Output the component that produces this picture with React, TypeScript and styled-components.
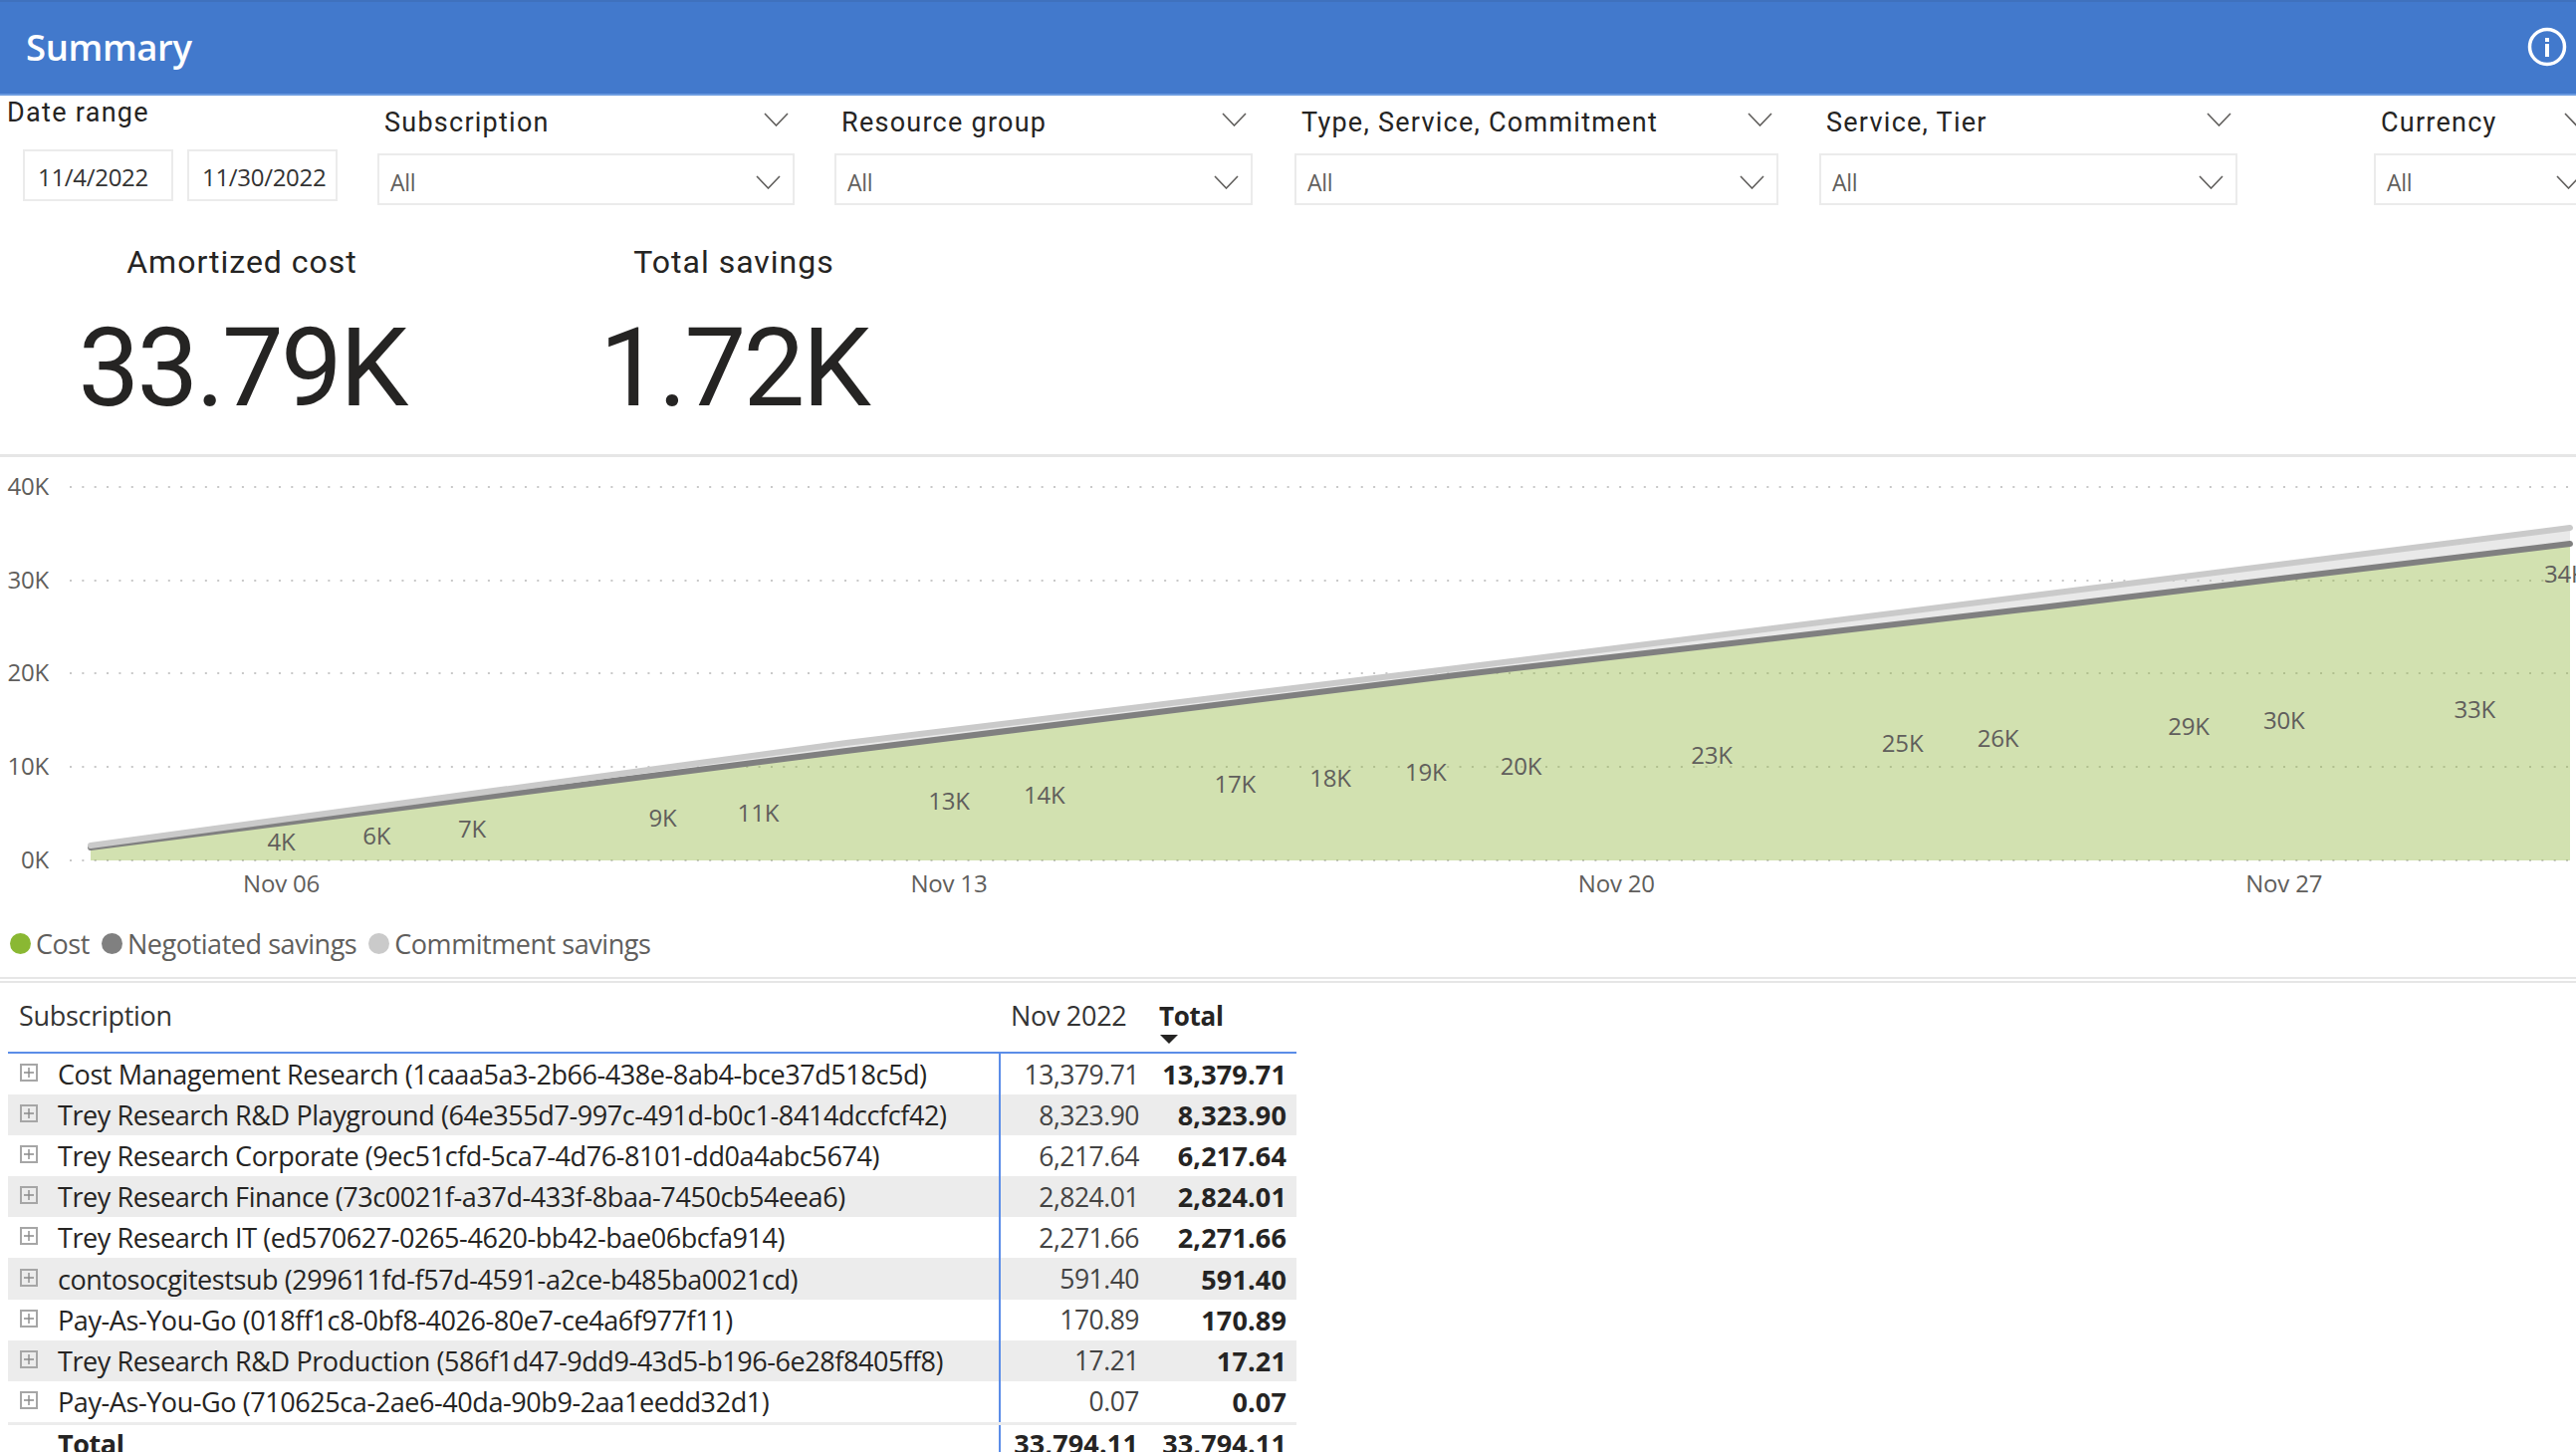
import { createGlobalStyle } from "styled-components";
import styled from "styled-components";

const GlobalStyle = createGlobalStyle`
  html, body {
    margin: 0;
    padding: 0;
    background: #fff;
    font-family: "Open Sans", "Noto Sans", sans-serif;
  }
  * { box-sizing: border-box; }
`;

const Page = styled.div`
  width: 2587px;
  height: 1458px;
  overflow: hidden;
  background: #fff;
`;
const Header = styled.header`
  height: 96px;
  background: #4279cc;
  border-top: 2px solid #3f71bd;
  border-bottom: 2px solid #6c9be0;
  display: flex;
  align-items: center;
  justify-content: space-between;
  padding: 0 9px 2px 26px;
`;
const Title = styled.h1`
  margin: 0;
  color: #fff;
  font-size: 36.5px;
  font-weight: 600;
  letter-spacing: -0.4px;
`;
const FilterRow = styled.div`
  display: flex;
  height: 110px;
`;
const DateGroup = styled.div`
  width: 379px;
  flex: none;
`;
const DateLabel = styled.div`
  height: 34px;
  line-height: 34px;
  padding-left: 7px;
  font-family: "Roboto", sans-serif;
  font-size: 27px;
  letter-spacing: 1.3px;
  color: #252423;
  margin-bottom: 20px;
`;
const DateInputs = styled.div`
  display: flex;
  gap: 14px;
  padding-left: 23px;
`;
const DateBox = styled.div`
  width: 151px;
  height: 52px;
  border: 2px solid #ebebeb;
  display: flex;
  align-items: center;
  padding: 2px 0 0 13px;
  font-size: 24px;
  letter-spacing: -0.3px;
  color: #333;
`;
const Slicer = styled.div<{ $width: number; $gapAfter: number }>`
  width: ${(p) => p.$width}px;
  margin-right: ${(p) => p.$gapAfter}px;
  flex: none;
`;
const SlicerHead = styled.div`
  height: 54px;
  margin-bottom: 4px;
  display: flex;
  align-items: center;
  justify-content: space-between;
  padding: 0 6px 0 7px;
  font-family: "Roboto", sans-serif;
  font-size: 27px;
  letter-spacing: 1.25px;
  color: #252423;
`;
const HeadChevron = styled.svg`
  width: 25px;
  height: 14px;
  margin-bottom: 6px;
  flex: none;
`;
const SlicerBox = styled.div`
  height: 52px;
  border: 2px solid #ebebeb;
  display: flex;
  align-items: center;
  justify-content: space-between;
  padding: 5px 12px 0 11px;
  font-size: 23px;
  letter-spacing: -0.3px;
  color: #605e5c;
`;
const KpiRow = styled.div`
  display: flex;
  height: 250px;
  padding-top: 38px;
`;
const Kpi = styled.div<{ $width: number }>`
  width: ${(p) => p.$width}px;
  text-align: center;
  color: #252423;
  font-family: "Roboto", sans-serif;
`;
const KpiLabel = styled.div`
  font-size: 32px;
  line-height: 38px;
  letter-spacing: 1px;
`;
const KpiValue = styled.div`
  font-size: 110px;
  line-height: 130px;
  margin-top: 23px;
  letter-spacing: -2.7px;
`;
const Divider = styled.div`
  height: 3px;
  background: #e6e6e6;
`;
const DoubleDivider = styled.div`
  height: 6px;
  border-top: 2px solid #e6e6e6;
  border-bottom: 2px solid #e6e6e6;
`;
const ChartSvg = styled.svg`
  display: block;
  width: 2587px;
  height: 450px;
  text {
    font-family: "Open Sans", sans-serif;
    font-size: 24px;
    letter-spacing: -0.2px;
    fill: #605e5c;
  }
`;
const Legend = styled.div`
  display: flex;
  align-items: center;
  gap: 12px;
  height: 42px;
  margin: 17px 0 13px;
  padding-left: 10px;
  font-size: 27px;
  letter-spacing: -0.45px;
  color: #605e5c;
`;
const LegendItem = styled.div`
  display: flex;
  align-items: center;
  gap: 5px;
`;
const LegendDot = styled.span<{ $color: string }>`
  width: 21px;
  height: 21px;
  border-radius: 50%;
  background: ${(p) => p.$color};
`;
const Table = styled.div`
  width: 1294px;
  margin-left: 8px;
  font-size: 27px;
  color: #252423;
`;
const HeadRow = styled.div`
  display: grid;
  grid-template-columns: 996px 149px 149px;
  height: 71px;
  border-bottom: 2px solid #5b8de8;
`;
const HeadCell = styled.div<{ $bold?: boolean }>`
  padding: 15px 0 0 11px;
  font-size: ${(p) => (p.$bold ? 26 : 27)}px;
  line-height: 36px;
  letter-spacing: -0.3px;
  font-weight: ${(p) => (p.$bold ? 700 : 400)};
  color: ${(p) => (p.$bold ? "#252423" : "#333")};
`;
const SortMark = styled.div`
  width: 0;
  height: 0;
  margin: 1px 0 0 1px;
  border-left: 9px solid transparent;
  border-right: 9px solid transparent;
  border-top: 9px solid #252423;
`;
const Row = styled.div<{ $striped?: boolean; $total?: boolean }>`
  display: grid;
  grid-template-columns: 997px 148px 149px;
  height: 41.1px;
  align-items: stretch;
  background: ${(p) => (p.$striped ? "#ececec" : "#fff")};
  border-top: ${(p) => (p.$total ? "3px solid #ececec" : "none")};
  font-weight: ${(p) => (p.$total ? 700 : 400)};
`;
const NameCell = styled.div`
  display: flex;
  align-items: center;
  gap: 20px;
  padding-left: 12px;
  border-right: 2px solid #5b8de8;
  letter-spacing: -0.42px;
  white-space: nowrap;
`;
const Expander = styled.span<{ $hidden?: boolean }>`
  width: 18px;
  height: 18px;
  flex: none;
  margin-top: -3px;
  border: 2px solid #a6a6a6;
  visibility: ${(p) => (p.$hidden ? "hidden" : "visible")};
  display: flex;
  align-items: center;
  justify-content: center;
  svg { display: block; }
`;
const ValueCell = styled.div<{ $bold?: boolean }>`
  display: flex;
  align-items: center;
  justify-content: flex-end;
  padding-right: ${(p) => (p.$bold ? 10 : 9)}px;
  font-size: ${(p) => (p.$bold ? 27 : 26.5)}px;
  font-weight: ${(p) => (p.$bold ? 700 : "inherit")};
  letter-spacing: ${(p) => (p.$bold ? 0.15 : -0.5)}px;
  color: ${(p) => (p.$bold ? "#252423" : "#444")};
`;

function Chevron() {
  return (
    <svg width="25" height="14" viewBox="0 0 25 14">
      <polyline points="1,1 12.5,13 24,1" fill="none" stroke="#605e5c" strokeWidth="1.6" />
    </svg>
  );
}

const filters = [
  { label: "Subscription", width: 419, gap: 40 },
  { label: "Resource group", width: 420, gap: 42 },
  { label: "Type, Service, Commitment", width: 486, gap: 41 },
  { label: "Service, Tier", width: 420, gap: 137 },
  { label: "Currency", width: 222, gap: 0 },
];

const dayX = (day: number) => 91 + (day - 4) * 95.77;

const negotiated = [[91, 851], [850, 754], [1462, 678], [2050, 610], [2581, 546]];
const commitment = [[91, 849], [850, 746], [1462, 671], [2050, 597], [2581, 530]];
const toPoints = (pts: number[][]) => pts.map((p) => p.join(",")).join(" ");

// [day of November, label, vertical centre of the label]
const dataLabels: [number, string, number][] = [
  [6, "4K", 846], [7, "6K", 840], [8, "7K", 833], [10, "9K", 822], [11, "11K", 817],
  [13, "13K", 805], [14, "14K", 799], [16, "17K", 788], [17, "18K", 782], [18, "19K", 776],
  [19, "20K", 770], [21, "23K", 759], [23, "25K", 747], [24, "26K", 742], [26, "29K", 730],
  [27, "30K", 724], [29, "33K", 713],
];

const gridLines = [
  { y: 489, label: "40K" },
  { y: 583, label: "30K" },
  { y: 676, label: "20K" },
  { y: 770, label: "10K" },
  { y: 864, label: "0K" },
];

function CostChart() {
  return (
    <ChartSvg viewBox="0 459 2587 450">
      {gridLines.map((g) => (
        <g key={g.label}>
          <text x="49" y={g.y + 8} textAnchor="end">{g.label}</text>
          <line x1="70" x2="2587" y1={g.y} y2={g.y} stroke="#c8c8c8" strokeWidth="2" strokeDasharray="2 10.35" />
        </g>
      ))}
      <polygon points={`${toPoints(negotiated)} 2581,864 91,864`} fill="#8eb53a" fillOpacity="0.4" />
      <polygon points={`${toPoints(commitment)} ${toPoints([...negotiated].reverse())}`} fill="#c8c8c8" fillOpacity="0.4" />
      <polyline points={toPoints(negotiated)} fill="none" stroke="#808080" strokeWidth="6" strokeLinecap="round" strokeLinejoin="round" />
      <polyline points={toPoints(commitment)} fill="none" stroke="#cacaca" strokeWidth="6" strokeLinecap="round" strokeLinejoin="round" />
      {dataLabels.map(([day, text, y]) => (
        <text key={text} x={dayX(day)} y={y + 8} textAnchor="middle">{text}</text>
      ))}
      <text x="2555" y="585">34K</text>
      {[["Nov 06", 6], ["Nov 13", 13], ["Nov 20", 20], ["Nov 27", 27]].map(([text, day]) => (
        <text key={text} x={dayX(day as number)} y="896" textAnchor="middle">{text}</text>
      ))}
    </ChartSvg>
  );
}

const rows = [
  ["Cost Management Research (1caaa5a3-2b66-438e-8ab4-bce37d518c5d)", "13,379.71"],
  ["Trey Research R&D Playground (64e355d7-997c-491d-b0c1-8414dccfcf42)", "8,323.90"],
  ["Trey Research Corporate (9ec51cfd-5ca7-4d76-8101-dd0a4abc5674)", "6,217.64"],
  ["Trey Research Finance (73c0021f-a37d-433f-8baa-7450cb54eea6)", "2,824.01"],
  ["Trey Research IT (ed570627-0265-4620-bb42-bae06bcfa914)", "2,271.66"],
  ["contosocgitestsub (299611fd-f57d-4591-a2ce-b485ba0021cd)", "591.40"],
  ["Pay-As-You-Go (018ff1c8-0bf8-4026-80e7-ce4a6f977f11)", "170.89"],
  ["Trey Research R&D Production (586f1d47-9dd9-43d5-b196-6e28f8405ff8)", "17.21"],
  ["Pay-As-You-Go (710625ca-2ae6-40da-90b9-2aa1eedd32d1)", "0.07"],
];

function App() {
  return (
    <Page>
      <GlobalStyle />
      <Header>
        <Title>Summary</Title>
        <svg width="40" height="40" viewBox="0 0 40 40">
          <circle cx="20" cy="20" r="17.5" fill="none" stroke="#fff" strokeWidth="3.5" />
          <rect x="18" y="11" width="4" height="4" fill="#fff" />
          <rect x="18" y="17" width="4" height="13" fill="#fff" />
        </svg>
      </Header>
      <FilterRow>
        <DateGroup>
          <DateLabel>Date range</DateLabel>
          <DateInputs>
            <DateBox>11/4/2022</DateBox>
            <DateBox>11/30/2022</DateBox>
          </DateInputs>
        </DateGroup>
        {filters.map((f) => (
          <Slicer key={f.label} $width={f.width} $gapAfter={f.gap}>
            <SlicerHead>
              {f.label}
              <HeadChevron viewBox="0 0 25 14">
                <polyline points="1,1 12.5,13 24,1" fill="none" stroke="#605e5c" strokeWidth="1.6" />
              </HeadChevron>
            </SlicerHead>
            <SlicerBox>
              All
              <Chevron />
            </SlicerBox>
          </Slicer>
        ))}
      </FilterRow>
      <KpiRow>
        <Kpi $width={486}>
          <KpiLabel>Amortized cost</KpiLabel>
          <KpiValue>33.79K</KpiValue>
        </Kpi>
        <Kpi $width={502}>
          <KpiLabel>Total savings</KpiLabel>
          <KpiValue>1.72K</KpiValue>
        </Kpi>
      </KpiRow>
      <Divider />
      <CostChart />
      <Legend>
        <LegendItem><LegendDot $color="#8ab833" />Cost</LegendItem>
        <LegendItem><LegendDot $color="#808080" />Negotiated savings</LegendItem>
        <LegendItem><LegendDot $color="#cacaca" />Commitment savings</LegendItem>
      </Legend>
      <DoubleDivider />
      <Table>
        <HeadRow>
          <HeadCell>Subscription</HeadCell>
          <HeadCell>Nov 2022</HeadCell>
          <HeadCell $bold>
            Total
            <SortMark />
          </HeadCell>
        </HeadRow>
        {rows.map(([name, value], i) => (
          <Row key={name} $striped={i % 2 === 1}>
            <NameCell>
              <Expander>
                <svg width="12" height="12" viewBox="0 0 12 12">
                  <path d="M6 1v10M1 6h10" stroke="#8a8a8a" strokeWidth="1.4" />
                </svg>
              </Expander>
              {name}
            </NameCell>
            <ValueCell>{value}</ValueCell>
            <ValueCell $bold>{value}</ValueCell>
          </Row>
        ))}
        <Row $total>
          <NameCell>
            <Expander $hidden />
            Total
          </NameCell>
          <ValueCell $bold>33,794.11</ValueCell>
          <ValueCell $bold>33,794.11</ValueCell>
        </Row>
      </Table>
    </Page>
  );
}

export default App;
